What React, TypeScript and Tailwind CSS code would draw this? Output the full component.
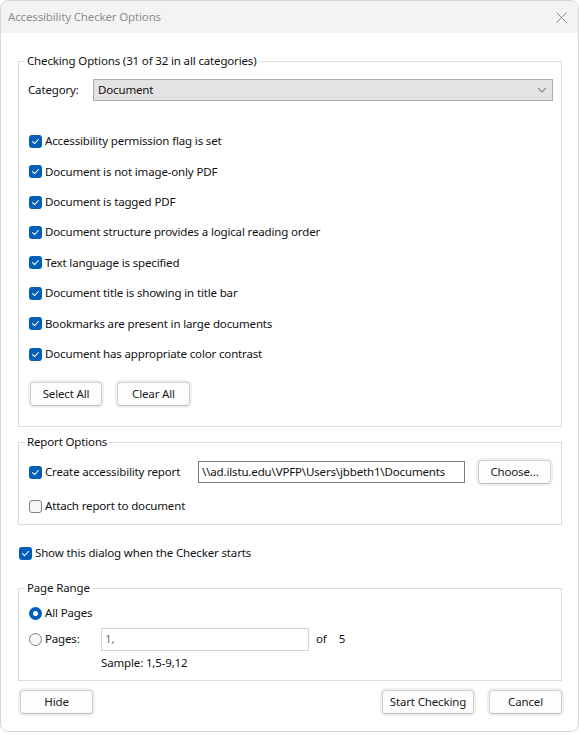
import React from "react";

function Check({ checked }: { checked: boolean }) {
  return checked ? (
    <span className="w-[13px] h-[13px] rounded-[3px] bg-[#005fb8] flex items-center justify-center shrink-0">
      <svg width="9" height="9" viewBox="0 0 9 9">
        <path d="M1.6 4.7 L3.6 6.6 L7.4 2.5" fill="none" stroke="white" strokeWidth="1.1" strokeLinecap="round" strokeLinejoin="round" />
      </svg>
    </span>
  ) : (
    <span className="w-[13px] h-[13px] rounded-[3px] border border-[#7f7f7f] bg-[#f6f6f6] shrink-0" />
  );
}

function Radio({ checked }: { checked: boolean }) {
  return checked ? (
    <span className="w-[13px] h-[13px] rounded-full bg-[#005fb8] flex items-center justify-center shrink-0">
      <span className="w-[5px] h-[5px] rounded-full bg-white" />
    </span>
  ) : (
    <span className="w-[13px] h-[13px] rounded-full border border-[#7f7f7f] bg-[#f6f6f6] shrink-0" />
  );
}

function Btn({ children, w }: { children: React.ReactNode; w: string }) {
  return (
    <div className={`${w} h-[24px] rounded-[4px] border border-[#d0d0d0] border-b-[#bdbdbd] bg-[#fdfdfd] shadow-[0_0_0_2px_#f0f0f0] flex items-center justify-center text-[#1a1a1a]`}>
      {children}
    </div>
  );
}

const items = [
  "Accessibility permission flag is set",
  "Document is not image-only PDF",
  "Document is tagged PDF",
  "Document structure provides a logical reading order",
  "Text language is specified",
  "Document title is showing in title bar",
  "Bookmarks are present in large documents",
  "Document has appropriate color contrast",
];

export default function App() {
  return (
    <div className="w-[579px] h-[734px] bg-white font-['Noto_Sans',sans-serif] text-[11.5px] leading-[16px] tracking-[-0.15px] text-[#111]">
      <div className="w-[579px] h-[732px] rounded-[8px] border border-[#d6d6d6] bg-white overflow-hidden flex flex-col">
        {/* Title bar */}
        <div className="h-[32px] bg-[#f3f3f3] flex items-center justify-between pl-[7px] pr-[10px] shrink-0">
          <span className="text-[#8f8f8f] text-[11.5px]">Accessibility Checker Options</span>
          <svg width="11" height="11" viewBox="0 0 11 11" className="mr-[1px]">
            <path d="M0.5 0.5 L10.5 10.5 M10.5 0.5 L0.5 10.5" stroke="#8a8a8a" strokeWidth="1" />
          </svg>
        </div>

        <div className="flex flex-col pl-[17px] pr-[16px]">
          {/* Checking Options */}
          <fieldset className="mt-[20px] border border-[#dcdcdc] pl-[9px] pr-[8px] pb-[20px]">
            <legend className="ml-[-3px] px-[2px]">Checking Options (31 of 32 in all categories)</legend>
            <div className="mt-[10px] h-[22px] flex items-center">
              <span className="w-[65px]">Category:</span>
              <div className="flex-1 h-[22px] bg-[#e3e3e3] border border-[#adadad] flex items-center justify-between pl-[4px] pr-[5px]">
                <span>Document</span>
                <svg width="10" height="6" viewBox="0 0 10 6">
                  <path d="M1 1 L5 5 L9 1" fill="none" stroke="#8c8c8c" strokeWidth="1.2" />
                </svg>
              </div>
            </div>
            <div className="mt-[25px] flex flex-col">
              {items.map((t) => (
                <div key={t} className="h-[30.43px] flex items-center gap-[3px] ml-[1px]">
                  <Check checked />
                  <span>{t}</span>
                </div>
              ))}
            </div>
            <div className="mt-[13px] flex gap-[15px] ml-[2px]">
              <Btn w="w-[72px]">Select All</Btn>
              <Btn w="w-[73px]">Clear All</Btn>
            </div>
          </fieldset>

          {/* Report Options */}
          <fieldset className="mt-[7px] border border-[#dcdcdc] pl-[10px] pr-[8px] pb-[8px]">
            <legend className="ml-[-4px] px-[2px]">Report Options</legend>
            <div className="mt-[10px] h-[24px] flex items-center">
              <div className="w-[169px] flex items-center gap-[3px]">
                <Check checked />
                <span>Create accessibility report</span>
              </div>
              <div className="w-[267px] h-[22px] border border-[#7a7a7a] bg-white flex items-center pl-[3px]">
                {"\\\\ad.ilstu.edu\\VPFP\\Users\\jbbeth1\\Documents"}
              </div>
              <div className="ml-[13px]">
                <Btn w="w-[73px]">Choose...</Btn>
              </div>
            </div>
            <div className="mt-[12px] h-[20px] flex items-center gap-[3px]">
              <Check checked={false} />
              <span>Attach report to document</span>
            </div>
          </fieldset>

          {/* Show dialog */}
          <div className="mt-[18px] h-[20px] flex items-center gap-[3px] ml-[1px]">
            <Check checked />
            <span>Show this dialog when the Checker starts</span>
          </div>

          {/* Page Range */}
          <fieldset className="mt-[17px] border border-[#dcdcdc] pl-[10px] pr-[8px] pb-[9px]">
            <legend className="ml-[-4px] px-[2px]">Page Range</legend>
            <div className="mt-[7px] h-[20px] flex items-center gap-[3px]">
              <Radio checked />
              <span>All Pages</span>
            </div>
            <div className="mt-[4px] h-[24px] flex items-center">
              <div className="w-[72px] flex items-center gap-[3px]">
                <Radio checked={false} />
                <span>Pages:</span>
              </div>
              <div className="w-[208px] h-[23px] border border-[#d4d4d4] bg-white flex items-center pl-[3px] text-[#6e6e8e]">
                1,
              </div>
              <span className="ml-[7px]">of</span>
              <span className="ml-[12px]">5</span>
            </div>
            <div className="mt-[4px] h-[16px] flex items-center pl-[72px]">Sample: 1,5-9,12</div>
          </fieldset>

          {/* Bottom buttons */}
          <div className="mt-[9px] flex items-center">
            <div className="ml-[2px]">
              <Btn w="w-[73px]">Hide</Btn>
            </div>
            <div className="ml-auto flex gap-[15px]">
              <Btn w="w-[92px]">Start Checking</Btn>
              <Btn w="w-[73px]">Cancel</Btn>
            </div>
          </div>
        </div>
      </div>
    </div>
  );
}
